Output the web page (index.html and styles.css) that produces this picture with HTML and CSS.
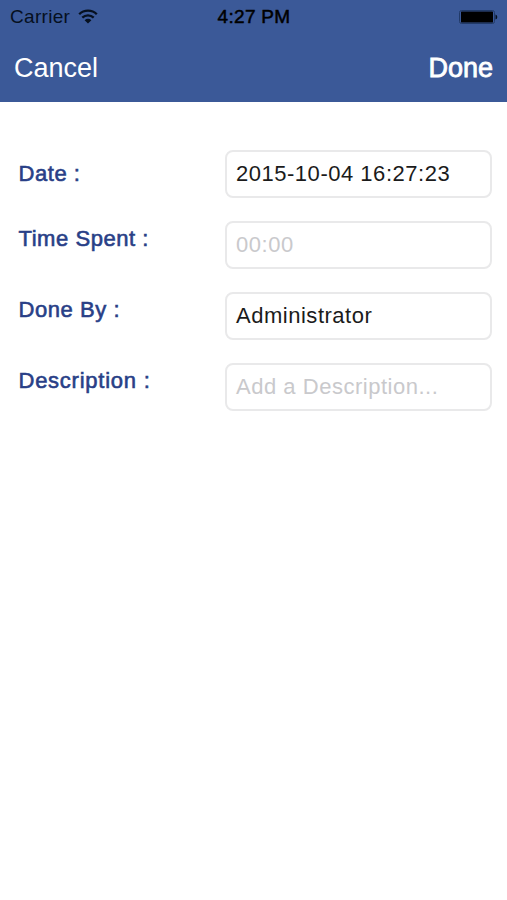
FILE: index.html
```html
<!DOCTYPE html>
<html lang="en">
<head>
<meta charset="utf-8">
<title>Time Entry</title>
<link rel="stylesheet" href="styles.css">
</head>
<body>
<header class="header">
  <div class="status">
    <div class="carrier">
      <span>Carrier</span>
      <svg class="wifi" width="20" height="15" viewBox="0 0 20 15" fill="none" stroke="currentColor" stroke-width="2.3">
        <path d="M1.2 5.2C6 .4 14 .4 18.8 5.2M4.3 8.6C7.5 5.5 12.5 5.5 15.7 8.6"/>
        <path d="M6.6 11.2C8.6 9.4 11.4 9.4 13.4 11.2L10 14.6Z" fill="currentColor" stroke="none"/>
      </svg>
    </div>
    <span class="time">4:27 PM</span>
    <svg class="battery" width="40" height="16" viewBox="0 0 40 16">
      <rect x="1.5" y="1.5" width="35" height="13" rx="2" fill="none" stroke="#213a68" stroke-width="1"/>
      <rect x="3" y="2.5" width="32" height="11" rx=".5" fill="#000"/>
      <path d="M37.5 5.5Q39.3 6 39.3 8T37.5 10.5Z" fill="#07101f"/>
    </svg>
  </div>
  <nav class="nav">
    <span class="cancel">Cancel</span>
    <span class="done">Done</span>
  </nav>
</header>
<main class="form">
  <div class="row"><span class="label label-first">Date :</span><div class="field date">2015-10-04 16:27:23</div></div>
  <div class="row"><span class="label">Time Spent :</span><div class="field placeholder">00:00</div></div>
  <div class="row"><span class="label">Done By :</span><div class="field">Administrator</div></div>
  <div class="row"><span class="label label-wide">Description :</span><div class="field placeholder">Add a Description...</div></div>
</main>
</body>
</html>
```
FILE: styles.css
```css
* { box-sizing: border-box; }
body {
  margin: 0;
  min-height: 900px;
  background: #fff;
  font-family: "Liberation Sans", Arial, sans-serif;
  white-space: nowrap;
}
.header {
  height: 102px;
  background: #3b5998;
}
.status {
  display: grid;
  grid-template-columns: 1fr auto 1fr;
  align-items: center;
  height: 34px;
  padding: 0 9px 0 10px;
  color: #06101f;
  font-size: 19px;
  line-height: 34px;
}
.carrier { display: flex; align-items: center; gap: 8px; letter-spacing: 0.3px; }
.wifi { margin-top: -2px; }
.time { color: #000; letter-spacing: 0.3px; -webkit-text-stroke: 0.5px #000; }
.battery { justify-self: end; }
.nav {
  display: flex;
  justify-content: space-between;
  padding: 0 14px;
  color: #fff;
  font-size: 27px;
  line-height: 68px;
}
.done { -webkit-text-stroke: 0.8px #fff; }
.form {
  display: grid;
  gap: 23.3px;
  padding: 47.5px 15px 0 18px;
}
.row { display: grid; grid-template-columns: 207px 267px; }
.label {
  padding-left: 0.5px;
  color: #293f87;
  font-size: 22px;
  line-height: 35px;
  letter-spacing: 0.55px;
  -webkit-text-stroke: 0.6px #293f87;
}
.label-first { line-height: 47px; }
.label-wide { letter-spacing: 0.75px; }
.field {
  height: 48px;
  padding: 0 9px;
  border: 2px solid #e9e9ea;
  border-radius: 8px;
  color: #1b1b1b;
  font-size: 22px;
  line-height: 44px;
  letter-spacing: 0.52px;
}
.placeholder { color: #c9c9cc; }
```
